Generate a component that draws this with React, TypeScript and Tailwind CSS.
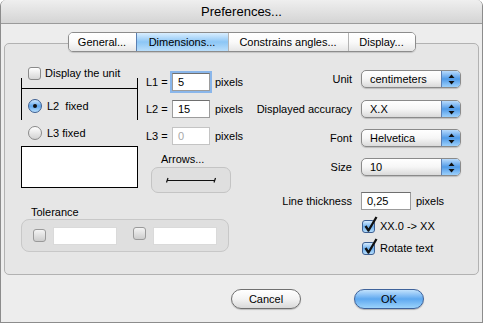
import React from 'react';

const Check = ({ checked = false, dim = false }: { checked?: boolean; dim?: boolean }) => (
  <span
    className={`relative inline-block w-[13px] h-[13px] shrink-0 rounded-[3px] border ${
      checked
        ? 'border-[#3d5f92] bg-linear-to-b from-[#d6ebfd] via-[#6fb1ef] to-[#b4dcfb]'
        : dim
        ? 'border-[#9a9a9a] bg-linear-to-b from-[#f4f4f4] to-[#cdcdcd]'
        : 'border-[#8a8a8a] bg-linear-to-b from-white to-[#d6d6d6]'
    }`}
  >
    {checked && (
      <svg className="absolute -top-[5px] left-[1px]" width="14" height="17" viewBox="0 0 14 17">
        <path d="M1.5 10 L4.5 14.5 L12.5 1" stroke="#111" strokeWidth="2.3" fill="none" strokeLinejoin="round" />
      </svg>
    )}
  </span>
);

const Radio = ({ on = false }: { on?: boolean }) => (
  <span
    className={`inline-flex w-[14px] h-[14px] shrink-0 items-center justify-center rounded-full border ${
      on
        ? 'border-[#3d5f92] bg-linear-to-b from-[#cfe8fd] via-[#5ea6ec] to-[#b6defc]'
        : 'border-[#8a8a8a] bg-linear-to-b from-white to-[#d2d2d2]'
    }`}
  >
    {on && <span className="w-[4px] h-[4px] rounded-full bg-[#111]" />}
  </span>
);

const Popup = ({ value }: { value: string }) => (
  <div className="relative flex items-center h-[18px] w-[100px] pl-[8px] rounded-[5px] border border-[#8a8a8a] bg-linear-to-b from-white via-[#f6f6f6] to-[#dadada] shadow-[0_1px_1px_rgba(0,0,0,0.18)]">
    <span>{value}</span>
    <span className="absolute right-0 top-0 bottom-0 w-[19px] flex items-center justify-center rounded-r-[4px] border-l border-[#5b7fb5] bg-linear-to-b from-[#b7dafc] via-[#4f9ae7] to-[#9cd0fb]">
      <svg width="7" height="11" viewBox="0 0 7 11">
        <path d="M3.5 0.5 L6.5 4 L0.5 4 Z" fill="#111" />
        <path d="M0.5 7 L6.5 7 L3.5 10.5 Z" fill="#111" />
      </svg>
    </span>
  </div>
);

const Field = ({ value = '', w, focus = false, disabled = false }: { value?: string; w: string; focus?: boolean; disabled?: boolean }) => (
  <div
    className={`${w} h-[18px] flex items-center pl-[5px] bg-white border ${
      disabled ? 'border-[#c4c4c4] text-[#a8a8a8]' : 'border-[#9c9c9c] border-t-[#6f6f6f]'
    } ${focus ? 'shadow-[0_0_0_2px_#8ab6ea]' : ''}`}
  >
    {value}
  </div>
);

const LRow = ({ name, value, focus, disabled }: { name: string; value: string; focus?: boolean; disabled?: boolean }) => (
  <div className="flex items-center h-[18px]">
    <span className="w-[26px]">{name} =</span>
    <Field value={value} w="w-[38px]" focus={focus} disabled={disabled} />
    <span className="ml-[5px]">pixels</span>
  </div>
);

const Label = ({ children }: { children: React.ReactNode }) => (
  <div className="w-[92px] flex justify-end whitespace-nowrap">{children}</div>
);

export default function App() {
  const tabs = ['General...', 'Dimensions...', 'Constrains angles...', 'Display...'];
  const tabW = ['w-[67px]', 'w-[92px]', 'w-[120px]', 'w-[67px]'];

  return (
    <div className="w-[483px] h-[323px] flex flex-col bg-[#ededed] border-x border-b border-[#8c8c8c] rounded-t-[6px] overflow-hidden text-[11px] text-black font-['Liberation_Sans',Arial,sans-serif]">
      {/* title bar */}
      <div className="h-[24px] shrink-0 flex items-center justify-center bg-linear-to-b from-[#efefef] to-[#d4d4d4] border-b border-[#9a9a9a] text-[13px]">
        Preferences...
      </div>

      {/* tabs */}
      <div className="relative z-10 mt-[8px] -mb-[9px] flex justify-center">
        <div className="flex h-[20px] rounded-[5px] border border-[#8c8c8c] overflow-hidden shadow-[0_1px_1px_rgba(0,0,0,0.15)]">
          {tabs.map((t, i) => (
            <div
              key={t}
              className={`${tabW[i]} flex items-center justify-center ${i > 0 ? 'border-l border-[#b4b4b4]' : ''} ${
                i === 1
                  ? 'bg-linear-to-b from-[#d9eeff] via-[#8cc6f5] to-[#b9defb] border-x-[#5a7fb2]'
                  : 'bg-linear-to-b from-white via-[#fafafa] to-[#e6e6e6]'
              }`}
            >
              {t}
            </div>
          ))}
        </div>
      </div>

      {/* panel */}
      <div className="mx-[3px] h-[232px] shrink-0 flex rounded-[5px] border border-[#b2b2b2] bg-[#e6e6e6]">
        {/* left */}
        <div className="pl-[16px] flex flex-col">
          <div className="flex items-start">
            <div className="w-[117px] pt-[23px] flex flex-col">
              <div className="flex items-center gap-[4px] pl-[7px] h-[13px]">
                <Check />
                <span>Display the unit</span>
              </div>
              <div className="h-[42px] -mt-[2px] flex flex-col border-x border-black">
                <div className="mt-[10px] border-t border-black" />
                <div className="mt-[10px] ml-[6px] h-[14px] flex items-center gap-[5px]">
                  <Radio on />
                  <span>L2&nbsp; fixed</span>
                </div>
              </div>
              <div className="mt-[6px] ml-[7px] h-[14px] flex items-center gap-[5px]">
                <Radio />
                <span>L3 fixed</span>
              </div>
              <div className="mt-[6px] h-[42px] bg-white border border-black" />
            </div>

            <div className="ml-[8px] pt-[29px] flex flex-col">
              <div className="flex flex-col gap-[9px]">
                <LRow name="L1" value="5" focus />
                <LRow name="L2" value="15" />
                <LRow name="L3" value="0" disabled />
              </div>
              <div className="mt-[8px] h-[13px] pl-[15px] leading-[13px]">Arrows...</div>
              <div className="mt-[1px] ml-[5px] w-[80px] h-[26px] flex items-center justify-center rounded-[7px] border border-[#c4c4c4] bg-[#dfdfdf]">
                <svg width="50" height="8" viewBox="0 0 50 8">
                  <path d="M1 4.5 H49" stroke="#111" strokeWidth="1.2" />
                  <path d="M0.5 6.5 L2 2" stroke="#111" strokeWidth="1.2" />
                  <path d="M48 6.5 L49.5 2" stroke="#111" strokeWidth="1.2" />
                </svg>
              </div>
            </div>
          </div>

          <div className="mt-[13px] h-[13px] pl-[10px] leading-[13px]">Tolerance</div>
          <div className="w-[208px] h-[33px] flex items-center pl-[11px] rounded-[8px] border border-[#c8c8c8] bg-[#dfdfdf]">
            <Check dim />
            <div className="ml-[7px] w-[64px] h-[18px] bg-white border border-[#dadada]" />
            <div className="ml-[16px]"><Check dim /></div>
            <div className="ml-[7px] w-[64px] h-[18px] bg-white border border-[#dadada]" />
          </div>
        </div>

        {/* right */}
        <div className="ml-auto pr-[17px] pt-[26px] flex flex-col">
          <div className="flex items-center h-[18px]">
            <Label>Unit</Label>
            <div className="ml-[9px]"><Popup value="centimeters" /></div>
          </div>
          <div className="mt-[12px] flex items-center h-[18px]">
            <Label>Displayed accuracy</Label>
            <div className="ml-[9px]"><Popup value="X.X" /></div>
          </div>
          <div className="mt-[11px] flex items-center h-[18px]">
            <Label>Font</Label>
            <div className="ml-[9px]"><Popup value="Helvetica" /></div>
          </div>
          <div className="mt-[11px] flex items-center h-[18px]">
            <Label>Size</Label>
            <div className="ml-[9px]"><Popup value="10" /></div>
          </div>
          <div className="mt-[16px] flex items-center h-[18px]">
            <Label>Line thickness</Label>
            <div className="ml-[9px]"><Field value="0,25" w="w-[50px]" /></div>
            <span className="ml-[5px]">pixels</span>
          </div>
          <div className="mt-[9px] ml-[102px] flex items-center gap-[5px] h-[14px]">
            <Check checked />
            <span>XX.0 -&gt; XX</span>
          </div>
          <div className="mt-[8px] ml-[102px] flex items-center gap-[5px] h-[14px]">
            <Check checked />
            <span>Rotate text</span>
          </div>
        </div>
      </div>

      {/* buttons */}
      <div className="mt-[14px] flex justify-end pr-[58px] gap-[53px]">
        <button className="w-[70px] h-[20px] rounded-full border border-[#707070] bg-linear-to-b from-white via-[#f3f3f3] to-[#d9d9d9] shadow-[0_1px_1px_rgba(0,0,0,0.2)]">
          Cancel
        </button>
        <button className="w-[70px] h-[20px] rounded-full border border-[#3f639b] bg-linear-to-b from-[#c0e1fc] via-[#5ea8ef] to-[#9bd3fb] shadow-[0_1px_1px_rgba(0,0,0,0.25)]">
          OK
        </button>
      </div>
    </div>
  );
}
